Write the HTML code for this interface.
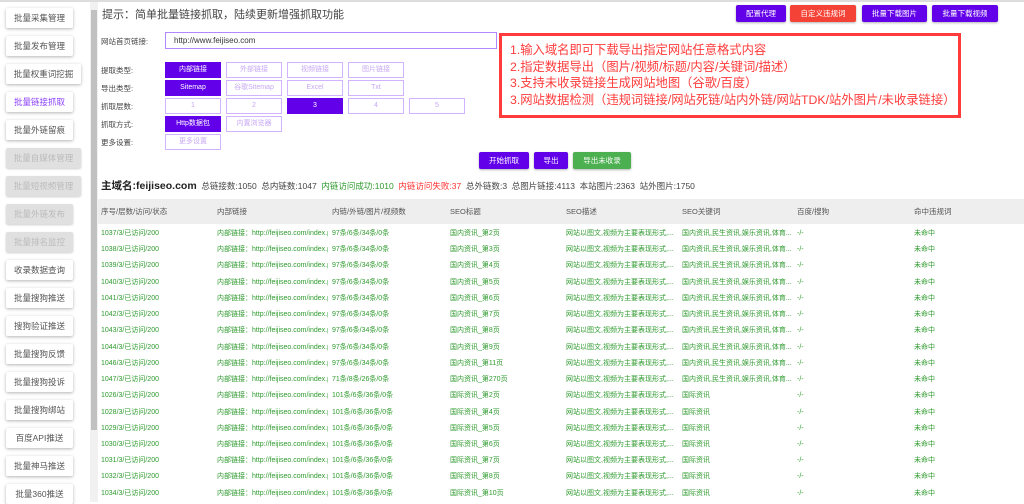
<!DOCTYPE html>
<html><head><meta charset="utf-8"><style>
*{margin:0;padding:0;box-sizing:border-box}
body{width:1024px;height:502px;overflow:hidden;background:#fff;font-family:"Liberation Sans","Noto Sans CJK SC",sans-serif;position:relative;color:#333}
.a{position:absolute;white-space:nowrap}
.sb{position:absolute;left:6px;width:67px;height:20px;background:#fff;box-shadow:0 1px 3px rgba(0,0,0,.3);border-radius:2px;font-size:8.5px;color:#555;text-align:center;line-height:20px}
.sb.d{background:#e0e0e0;color:#bbb;box-shadow:0 1px 2px rgba(0,0,0,.2)}
.ob{position:absolute;width:56px;height:16px;border:1px solid #d1b3ff;color:#c7a8f5;font-size:7px;text-align:center;line-height:14px;background:#fff}
.ob.on{background:#6200ea;border-color:#6200ea;color:#fff}
.lb{position:absolute;left:101px;font-size:7.5px;color:#444}
.tb{position:absolute;height:17px;top:5px;color:#fff;font-size:7.5px;text-align:center;line-height:17px;border-radius:2px;background:#6200ea;box-shadow:0 1px 2px rgba(0,0,0,.3)}
.r{position:absolute;left:101px;height:14px;font-size:7px;color:#2e9a2e;line-height:14px;width:915px}
.r span{position:absolute;top:0;white-space:nowrap}
.c1{left:0}.c2{left:116px;width:111px;overflow:hidden}.c3{left:231px}.c4{left:349px}.c5{left:465px}.c6{left:581px}.c7{left:696px}.c8{left:813px}
.h span{position:absolute;top:0;white-space:nowrap}
</style></head><body>
<div class="a" style="left:0;top:0;width:1024px;height:2px;background:#ddd"></div>
<div class="sb" style="top:8px">批量采集管理</div>
<div class="sb" style="top:36px">批量发布管理</div>
<div class="sb" style="top:64px;width:75px">批量权重词挖掘</div>
<div class="sb" style="top:92px;color:#8a3ffc">批量链接抓取</div>
<div class="sb" style="top:120px">批量外链留痕</div>
<div class="sb d" style="top:148px;width:75px">批量自媒体管理</div>
<div class="sb d" style="top:176px;width:75px">批量短视频管理</div>
<div class="sb d" style="top:204px">批量外链发布</div>
<div class="sb d" style="top:232px">批量排名监控</div>
<div class="sb" style="top:260px">收录数据查询</div>
<div class="sb" style="top:288px">批量搜狗推送</div>
<div class="sb" style="top:316px">搜狗验证推送</div>
<div class="sb" style="top:344px">批量搜狗反馈</div>
<div class="sb" style="top:372px">批量搜狗投诉</div>
<div class="sb" style="top:400px">批量搜狗绑站</div>
<div class="sb" style="top:428px">百度API推送</div>
<div class="sb" style="top:456px">批量神马推送</div>
<div class="sb" style="top:484px">批量360推送</div>
<div class="a" style="left:90px;top:2px;width:8px;height:500px;background:#f1f1f1"></div>
<div class="a" style="left:91px;top:10px;width:6px;height:420px;background:#c1c1c1"></div>
<div class="a" style="left:102px;top:6px;font-size:11px;color:#444">提示：简单批量链接抓取，陆续更新增强抓取功能</div>
<div class="tb" style="left:736px;width:50px">配置代理</div>
<div class="tb" style="left:790px;width:66px;background:#f44336">自定义违规词</div>
<div class="tb" style="left:862px;width:65px">批量下载图片</div>
<div class="tb" style="left:932px;width:66px">批量下载视频</div>
<div class="lb" style="top:36px">网站首页链接:</div>
<div class="a" style="left:165px;top:32px;width:332px;height:17px;border:1px solid #b388ff;font-size:8px;line-height:15px;padding-left:8px;color:#333">http://www.feijiseo.com</div>
<div class="a" style="left:499px;top:33px;width:462px;height:85px;border:3px solid #ff3b3b;color:#ff3b3b;font-size:12.3px;line-height:16.5px;padding:6px 0 0 8px">1.输入域名即可下载导出指定网站任意格式内容<br>2.指定数据导出（图片/视频/标题/内容/关键词/描述）<br>3.支持未收录链接生成网站地图（谷歌/百度）<br>3.网站数据检测（违规词链接/网站死链/站内外链/网站TDK/站外图片/未收录链接）</div>
<div class="lb" style="top:65px">提取类型:</div>
<div class="ob on" style="left:165px;top:62px">内部链接</div><div class="ob" style="left:226px;top:62px">外部链接</div><div class="ob" style="left:287px;top:62px">视频链接</div><div class="ob" style="left:348px;top:62px">图片链接</div>
<div class="lb" style="top:83px">导出类型:</div>
<div class="ob on" style="left:165px;top:80px">Sitemap</div><div class="ob" style="left:226px;top:80px">谷歌Sitemap</div><div class="ob" style="left:287px;top:80px">Excel</div><div class="ob" style="left:348px;top:80px">Txt</div>
<div class="lb" style="top:101px">抓取层数:</div>
<div class="ob" style="left:165px;top:98px">1</div><div class="ob" style="left:226px;top:98px">2</div><div class="ob on" style="left:287px;top:98px">3</div><div class="ob" style="left:348px;top:98px">4</div><div class="ob" style="left:409px;top:98px">5</div>
<div class="lb" style="top:119px">抓取方式:</div>
<div class="ob on" style="left:165px;top:116px">Http数据包</div><div class="ob" style="left:226px;top:116px">内置浏览器</div>
<div class="lb" style="top:137px">更多设置:</div>
<div class="ob" style="left:165px;top:134px">更多设置</div>
<div class="tb" style="left:479px;top:152px;width:50px">开始抓取</div>
<div class="tb" style="left:534px;top:152px;width:34px">导出</div>
<div class="tb" style="left:573px;top:152px;width:58px;background:#4caf50">导出未收录</div>
<div class="a" style="left:101px;top:180px;font-size:8.5px;color:#444;line-height:12px"><b style="font-size:10.5px;color:#222">主域名:feijiseo.com</b>&nbsp; 总链接数:1050&nbsp; 总内链数:1047&nbsp; <span style="color:#2e9a2e">内链访问成功:1010</span>&nbsp; <span style="color:#f33">内链访问失败:37</span>&nbsp; 总外链数:3&nbsp; 总图片链接:4113&nbsp; 本站图片:2363&nbsp; 站外图片:1750</div>
<div class="a h" style="left:98px;top:199px;width:926px;height:25px;background:#eee;font-size:7.5px;color:#555;line-height:25px">
<span style="left:3px">序号/层数/访问/状态</span><span style="left:119px">内部链接</span><span style="left:234px">内链/外链/图片/视频数</span><span style="left:352px">SEO标题</span><span style="left:468px">SEO描述</span><span style="left:584px">SEO关键词</span><span style="left:699px">百度/搜狗</span><span style="left:816px">命中违规词</span></div>
<div class="r" style="top:227px"><span class="c1">1037/3/已访问/200</span><span class="c2">内部链接：http://feijiseo.com/index.php</span><span class="c3">97条/6条/34条/0条</span><span class="c4">国内资讯_第2页</span><span class="c5">网站以图文,视频为主要表现形式,...</span><span class="c6">国内资讯,民生资讯,娱乐资讯,体育...</span><span class="c7">-/-</span><span class="c8">未命中</span></div>
<div class="r" style="top:243px"><span class="c1">1038/3/已访问/200</span><span class="c2">内部链接：http://feijiseo.com/index.php</span><span class="c3">97条/6条/34条/0条</span><span class="c4">国内资讯_第3页</span><span class="c5">网站以图文,视频为主要表现形式,...</span><span class="c6">国内资讯,民生资讯,娱乐资讯,体育...</span><span class="c7">-/-</span><span class="c8">未命中</span></div>
<div class="r" style="top:259px"><span class="c1">1039/3/已访问/200</span><span class="c2">内部链接：http://feijiseo.com/index.php</span><span class="c3">97条/6条/34条/0条</span><span class="c4">国内资讯_第4页</span><span class="c5">网站以图文,视频为主要表现形式,...</span><span class="c6">国内资讯,民生资讯,娱乐资讯,体育...</span><span class="c7">-/-</span><span class="c8">未命中</span></div>
<div class="r" style="top:276px"><span class="c1">1040/3/已访问/200</span><span class="c2">内部链接：http://feijiseo.com/index.php</span><span class="c3">97条/6条/34条/0条</span><span class="c4">国内资讯_第5页</span><span class="c5">网站以图文,视频为主要表现形式,...</span><span class="c6">国内资讯,民生资讯,娱乐资讯,体育...</span><span class="c7">-/-</span><span class="c8">未命中</span></div>
<div class="r" style="top:292px"><span class="c1">1041/3/已访问/200</span><span class="c2">内部链接：http://feijiseo.com/index.php</span><span class="c3">97条/6条/34条/0条</span><span class="c4">国内资讯_第6页</span><span class="c5">网站以图文,视频为主要表现形式,...</span><span class="c6">国内资讯,民生资讯,娱乐资讯,体育...</span><span class="c7">-/-</span><span class="c8">未命中</span></div>
<div class="r" style="top:308px"><span class="c1">1042/3/已访问/200</span><span class="c2">内部链接：http://feijiseo.com/index.php</span><span class="c3">97条/6条/34条/0条</span><span class="c4">国内资讯_第7页</span><span class="c5">网站以图文,视频为主要表现形式,...</span><span class="c6">国内资讯,民生资讯,娱乐资讯,体育...</span><span class="c7">-/-</span><span class="c8">未命中</span></div>
<div class="r" style="top:324px"><span class="c1">1043/3/已访问/200</span><span class="c2">内部链接：http://feijiseo.com/index.php</span><span class="c3">97条/6条/34条/0条</span><span class="c4">国内资讯_第8页</span><span class="c5">网站以图文,视频为主要表现形式,...</span><span class="c6">国内资讯,民生资讯,娱乐资讯,体育...</span><span class="c7">-/-</span><span class="c8">未命中</span></div>
<div class="r" style="top:341px"><span class="c1">1044/3/已访问/200</span><span class="c2">内部链接：http://feijiseo.com/index.php</span><span class="c3">97条/6条/34条/0条</span><span class="c4">国内资讯_第9页</span><span class="c5">网站以图文,视频为主要表现形式,...</span><span class="c6">国内资讯,民生资讯,娱乐资讯,体育...</span><span class="c7">-/-</span><span class="c8">未命中</span></div>
<div class="r" style="top:357px"><span class="c1">1046/3/已访问/200</span><span class="c2">内部链接：http://feijiseo.com/index.php</span><span class="c3">97条/6条/34条/0条</span><span class="c4">国内资讯_第11页</span><span class="c5">网站以图文,视频为主要表现形式,...</span><span class="c6">国内资讯,民生资讯,娱乐资讯,体育...</span><span class="c7">-/-</span><span class="c8">未命中</span></div>
<div class="r" style="top:373px"><span class="c1">1047/3/已访问/200</span><span class="c2">内部链接：http://feijiseo.com/index.php</span><span class="c3">71条/8条/26条/0条</span><span class="c4">国内资讯_第270页</span><span class="c5">网站以图文,视频为主要表现形式,...</span><span class="c6">国内资讯,民生资讯,娱乐资讯,体育...</span><span class="c7">-/-</span><span class="c8">未命中</span></div>
<div class="r" style="top:389px"><span class="c1">1026/3/已访问/200</span><span class="c2">内部链接：http://feijiseo.com/index.php</span><span class="c3">101条/6条/36条/0条</span><span class="c4">国际资讯_第2页</span><span class="c5">网站以图文,视频为主要表现形式,...</span><span class="c6">国际资讯</span><span class="c7">-/-</span><span class="c8">未命中</span></div>
<div class="r" style="top:406px"><span class="c1">1028/3/已访问/200</span><span class="c2">内部链接：http://feijiseo.com/index.php</span><span class="c3">101条/6条/36条/0条</span><span class="c4">国际资讯_第4页</span><span class="c5">网站以图文,视频为主要表现形式,...</span><span class="c6">国际资讯</span><span class="c7">-/-</span><span class="c8">未命中</span></div>
<div class="r" style="top:422px"><span class="c1">1029/3/已访问/200</span><span class="c2">内部链接：http://feijiseo.com/index.php</span><span class="c3">101条/6条/36条/0条</span><span class="c4">国际资讯_第5页</span><span class="c5">网站以图文,视频为主要表现形式,...</span><span class="c6">国际资讯</span><span class="c7">-/-</span><span class="c8">未命中</span></div>
<div class="r" style="top:438px"><span class="c1">1030/3/已访问/200</span><span class="c2">内部链接：http://feijiseo.com/index.php</span><span class="c3">101条/6条/36条/0条</span><span class="c4">国际资讯_第6页</span><span class="c5">网站以图文,视频为主要表现形式,...</span><span class="c6">国际资讯</span><span class="c7">-/-</span><span class="c8">未命中</span></div>
<div class="r" style="top:454px"><span class="c1">1031/3/已访问/200</span><span class="c2">内部链接：http://feijiseo.com/index.php</span><span class="c3">101条/6条/36条/0条</span><span class="c4">国际资讯_第7页</span><span class="c5">网站以图文,视频为主要表现形式,...</span><span class="c6">国际资讯</span><span class="c7">-/-</span><span class="c8">未命中</span></div>
<div class="r" style="top:470px"><span class="c1">1032/3/已访问/200</span><span class="c2">内部链接：http://feijiseo.com/index.php</span><span class="c3">101条/6条/36条/0条</span><span class="c4">国际资讯_第8页</span><span class="c5">网站以图文,视频为主要表现形式,...</span><span class="c6">国际资讯</span><span class="c7">-/-</span><span class="c8">未命中</span></div>
<div class="r" style="top:487px"><span class="c1">1034/3/已访问/200</span><span class="c2">内部链接：http://feijiseo.com/index.php</span><span class="c3">101条/6条/36条/0条</span><span class="c4">国际资讯_第10页</span><span class="c5">网站以图文,视频为主要表现形式,...</span><span class="c6">国际资讯</span><span class="c7">-/-</span><span class="c8">未命中</span></div>
</body></html>
